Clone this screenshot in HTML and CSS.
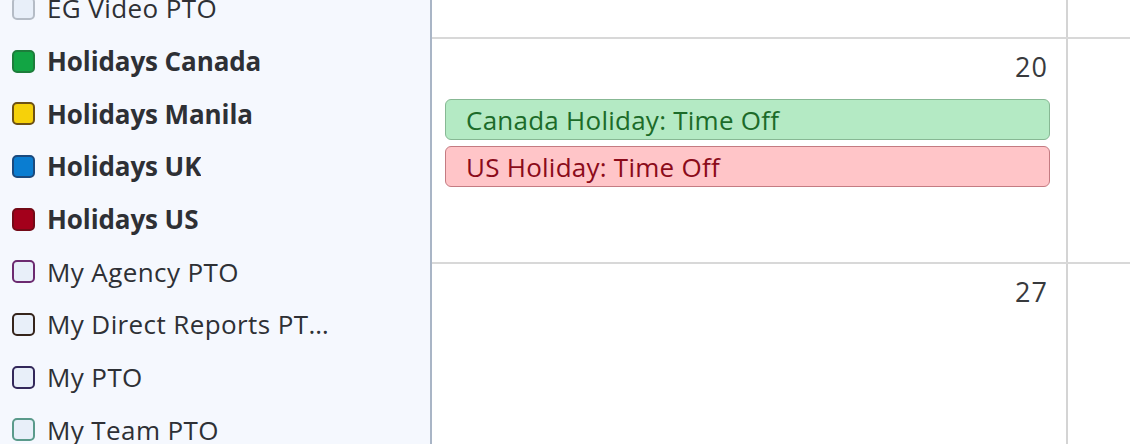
FILE: index.html
```html
<!DOCTYPE html>
<html>
<head>
<meta charset="utf-8">
<link rel="stylesheet" href="styles.css">
</head>
<body>
<div class="app">
  <aside class="sidebar">
    <ul class="cal-list">
      <li class="cal-item"><span class="box box-eg"></span><span class="label">EG Video PTO</span></li>
      <li class="cal-item on"><span class="box box-ca"></span><span class="label">Holidays Canada</span></li>
      <li class="cal-item on"><span class="box box-mn"></span><span class="label">Holidays Manila</span></li>
      <li class="cal-item on"><span class="box box-uk"></span><span class="label">Holidays UK</span></li>
      <li class="cal-item on"><span class="box box-us"></span><span class="label">Holidays US</span></li>
      <li class="cal-item"><span class="box box-agency"></span><span class="label">My Agency PTO</span></li>
      <li class="cal-item"><span class="box box-direct"></span><span class="label" title="My Direct Reports PTO">My Direct Reports PT…</span></li>
      <li class="cal-item"><span class="box box-my"></span><span class="label">My PTO</span></li>
      <li class="cal-item"><span class="box box-team"></span><span class="label">My Team PTO</span></li>
    </ul>
  </aside>
  <main class="calendar">
    <div class="week week-top">
      <div class="day main-day"></div>
      <div class="day side-day"></div>
    </div>
    <div class="week week-full">
      <div class="day main-day">
        <div class="day-num">20</div>
        <div class="events">
          <div class="event ev-ca">Canada Holiday: Time Off</div>
          <div class="event ev-us">US Holiday: Time Off</div>
        </div>
      </div>
      <div class="day side-day"></div>
    </div>
    <div class="week week-last">
      <div class="day main-day">
        <div class="day-num">27</div>
      </div>
      <div class="day side-day"></div>
    </div>
  </main>
</div>
</body>
</html>
```
FILE: styles.css
```css
* { box-sizing: border-box; }
html, body { margin: 0; padding: 0; }
body {
  width: 1130px;
  height: 444px;
  overflow: hidden;
  background: #ffffff;
  font-family: "Open Sans", "Liberation Sans", sans-serif;
  color: #2e3035;
}
.app {
  display: flex;
  height: 444px;
}
.sidebar {
  width: 432px;
  flex: 0 0 432px;
  background: #f5f8fe;
  border-right: 2px solid #a9b5c6;
  overflow: hidden;
}
.cal-list {
  list-style: none;
  margin: -18px 0 0 0;
  padding: 0;
}
.cal-item {
  height: 52.7px;
  display: flex;
  align-items: center;
  padding-left: 12px;
  gap: 12px;
  font-size: 26px;
  letter-spacing: 0.4px;
}
.cal-item.on .label { font-weight: 700; letter-spacing: -0.1px; }
.label {
  white-space: nowrap;
  overflow: hidden;
  text-overflow: ellipsis;
  max-width: 300px;
}
.box {
  width: 23px;
  height: 23px;
  flex: 0 0 23px;
  border-radius: 5px;
  border: 2px solid #b3bac4;
  background: #e8eff9;
}
.box-eg { border-color: #b5bcc6; }
.box-ca { background: #12a544; border-color: #1d7d3b; }
.box-mn { background: #f6d10a; border-color: #6e5113; }
.box-uk { background: #0a7dd1; border-color: #1b4a7e; }
.box-us { background: #a3001b; border-color: #730a17; }
.box-agency { border-color: #6c2a70; }
.box-direct { border-color: #35241b; }
.box-my { border-color: #33285a; }
.box-team { border-color: #5a9a8b; }

.calendar {
  flex: 1;
  display: flex;
  flex-direction: column;
}
.week {
  display: flex;
  border-bottom: 2px solid #d8d8d8;
}
.week-top { height: 39px; }
.week-full { height: 225px; }
.week-last { flex: 1; border-bottom: none; }
.day.main-day {
  width: 636px;
  flex: 0 0 636px;
  border-right: 2px solid #d4d4d4;
  display: flex;
  flex-direction: column;
}
.day.side-day { flex: 1; }
.day-num {
  text-align: right;
  font-size: 27px;
  line-height: 30px;
  letter-spacing: 1px;
  color: #383a3d;
  padding: 13px 18px 0 0;
}
.events {
  display: flex;
  flex-direction: column;
  gap: 6px;
  padding: 17px 16px 0 13px;
}
.event {
  height: 41px;
  border-radius: 6px;
  border: 1.5px solid;
  padding-left: 20px;
  display: flex;
  align-items: center;
  font-size: 26px;
  letter-spacing: 0.25px;
  white-space: nowrap;
}
.ev-ca { background: #b4eac4; border-color: #87b894; color: #1c6b29; }
.ev-us { background: #ffc5c8; border-color: #c47b82; color: #8b0b1a; }
```
